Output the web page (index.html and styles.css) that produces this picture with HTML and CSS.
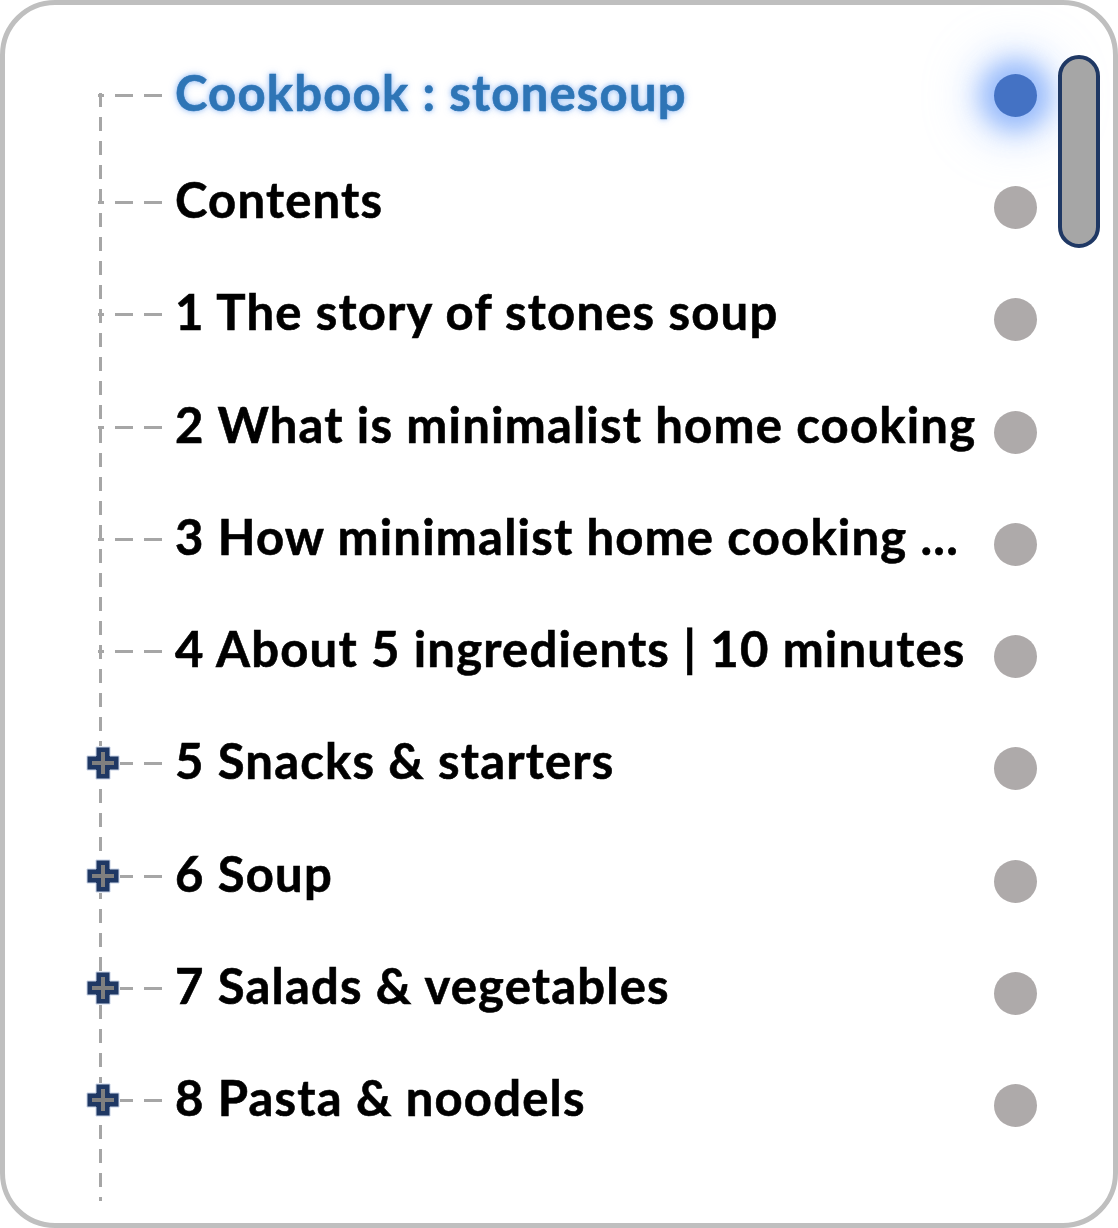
FILE: index.html
```html
<!DOCTYPE html>
<html lang="en">
<head>
<meta charset="utf-8">
<title>Cookbook : stonesoup</title>
<link rel="stylesheet" href="styles.css">
</head>
<body>
<div class="panel">
  <ul class="tree">
    <li class="row current"><span class="link"></span><span class="label">Cookbook : stonesoup</span><span class="dot"></span></li>
    <li class="row"><span class="link"></span><span class="label">Contents</span><span class="dot"></span></li>
    <li class="row"><span class="link"></span><span class="label">1 The story of stones soup</span><span class="dot"></span></li>
    <li class="row"><span class="link"></span><span class="label">2 What is minimalist home cooking</span><span class="dot"></span></li>
    <li class="row"><span class="link"></span><span class="label">3 How minimalist home cooking ...</span><span class="dot"></span></li>
    <li class="row"><span class="link"></span><span class="label">4 About 5 ingredients | 10 minutes</span><span class="dot"></span></li>
    <li class="row"><span class="link"><svg class="plus" viewBox="0 0 34 34" width="34" height="34"><path d="M10 1h14v9h9v14h-9v9H10v-9H1V10h9z" fill="#1f3864" stroke="#c9d3e6" stroke-width="1"/><path d="M17 6v22M6 17h22" stroke="#7f7f7f" stroke-width="4"/></svg></span><span class="label">5 Snacks &amp; starters</span><span class="dot"></span></li>
    <li class="row"><span class="link"><svg class="plus" viewBox="0 0 34 34" width="34" height="34"><path d="M10 1h14v9h9v14h-9v9H10v-9H1V10h9z" fill="#1f3864" stroke="#c9d3e6" stroke-width="1"/><path d="M17 6v22M6 17h22" stroke="#7f7f7f" stroke-width="4"/></svg></span><span class="label">6 Soup</span><span class="dot"></span></li>
    <li class="row"><span class="link"><svg class="plus" viewBox="0 0 34 34" width="34" height="34"><path d="M10 1h14v9h9v14h-9v9H10v-9H1V10h9z" fill="#1f3864" stroke="#c9d3e6" stroke-width="1"/><path d="M17 6v22M6 17h22" stroke="#7f7f7f" stroke-width="4"/></svg></span><span class="label">7 Salads &amp; vegetables</span><span class="dot"></span></li>
    <li class="row"><span class="link"><svg class="plus" viewBox="0 0 34 34" width="34" height="34"><path d="M10 1h14v9h9v14h-9v9H10v-9H1V10h9z" fill="#1f3864" stroke="#c9d3e6" stroke-width="1"/><path d="M17 6v22M6 17h22" stroke="#7f7f7f" stroke-width="4"/></svg></span><span class="label">8 Pasta &amp; noodels</span><span class="dot"></span></li>
  </ul>
  <div class="scrollbar"></div>
</div>
</body>
</html>
```

FILE: styles.css
```css
html, body {
  margin: 0;
  padding: 0;
  background: #ffffff;
}

.panel {
  position: relative;
  box-sizing: border-box;
  width: 1118px;
  height: 1228px;
  border: 5px solid #bfbfbf;
  border-radius: 55px;
  background: #ffffff;
  overflow: hidden;
}

.tree {
  position: relative;
  list-style: none;
  margin: 0;
  padding: 34px 0 0 93px;
  font-family: Lato, "Open Sans", sans-serif;
  font-weight: 700;
  font-size: 49px;
  letter-spacing: 1.2px;
  color: #000000;
}

/* vertical guide of the tree */
.tree::before {
  content: "";
  position: absolute;
  left: 94px;
  top: 88px;
  height: 1108px;
  width: 3px;
  background: repeating-linear-gradient(to bottom, #a6a6a6 0 14px, transparent 14px 24px);
}

.row {
  display: flex;
  align-items: center;
  height: 112.3px;
}

.row.current {
  margin-bottom: -5px;
}

/* horizontal dashed connector from the guide to the label */
.link {
  position: relative;
  flex: none;
  width: 64px;
  height: 3px;
  background: repeating-linear-gradient(to left, #a6a6a6 0 18px, transparent 18px 29px);
}

.plus {
  position: absolute;
  left: -12px;
  top: -16px;
  background: #ffffff;
}

.label {
  flex: 1;
  margin-left: 13px;
  white-space: nowrap;
  line-height: 1;
  padding-bottom: 6px;
  -webkit-text-stroke: 0.6px currentColor;
}

.current .label {
  color: #2e75b6;
  text-shadow: 0 0 4px rgba(150, 190, 245, 0.95), 0 0 9px rgba(160, 195, 245, 0.8);
}

.dot {
  flex: none;
  width: 43px;
  height: 43px;
  margin: 10px 76px 0 0;
  border-radius: 50%;
  background: #aeaaaa;
}

.current .dot {
  margin-top: 0;
  background: #4472c4;
  box-shadow: 0 0 24px 14px rgba(120, 165, 250, 0.7), 0 0 46px 26px rgba(170, 200, 255, 0.35);
}

.scrollbar {
  position: absolute;
  top: 50px;
  right: 13px;
  box-sizing: border-box;
  width: 42px;
  height: 193px;
  border: 4px solid #1f3864;
  border-radius: 21px;
  background: #a6a6a6;
}
```
